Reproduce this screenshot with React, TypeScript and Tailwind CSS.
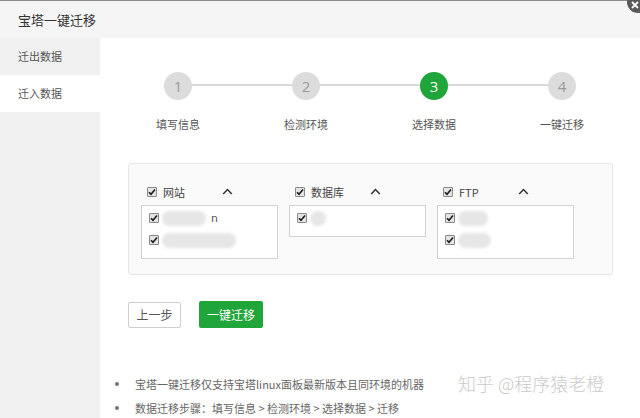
import React from "react";

const CheckBox = () => (
  <span className="inline-flex w-[10px] h-[10px] shrink-0 items-center justify-center border border-[#8a8a8a] bg-[#e4e4e4] rounded-[1px]">
    <svg width="8" height="8" viewBox="0 0 8 8">
      <path d="M1 4.2 L3 6.3 L7 1.6" fill="none" stroke="#1a1a1a" strokeWidth="1.6" />
    </svg>
  </span>
);

const Caret = () => (
  <svg width="11" height="7" viewBox="0 0 11 7">
    <polyline points="1.2,6 5.5,1.5 9.8,6" fill="none" stroke="#333" strokeWidth="1.5" />
  </svg>
);

const Blob = ({ w, h = 15 }: { w: number; h?: number }) => (
  <span
    className="inline-block rounded-full bg-[#e6e6e6] blur-[1.5px]"
    style={{ width: w, height: h }}
  />
);

type Item = { blobs: number[]; tail?: string };

const Column = ({ label, items }: { label: string; items: Item[] }) => (
  <div className="relative w-[137px] shrink-0">
    <div className="flex items-center h-[18px] pl-[6px] gap-[6px] text-[11px] text-[#444]">
      <CheckBox />
      <span className="leading-none">{label}</span>
    </div>
    <div className="absolute left-[81px] top-[5px]">
      <Caret />
    </div>
    <div className="mt-[4px] border border-[#d2d2d2] bg-white pt-[1px] pb-[7px] pl-[7px]">
      {items.map((it, i) => (
        <div key={i} className="flex items-center h-[22px] gap-[3px]">
          <CheckBox />
          {it.blobs.map((b, j) => (
            <Blob key={j} w={b} />
          ))}
          {it.tail && <span className="text-[11px] text-[#555] leading-none ml-[2px] font-['DejaVu_Sans']">{it.tail}</span>}
        </div>
      ))}
    </div>
  </div>
);

export default function App() {
  const steps = [
    { n: "1", label: "填写信息" },
    { n: "2", label: "检测环境" },
    { n: "3", label: "选择数据", active: true },
    { n: "4", label: "一键迁移" },
  ];
  return (
    <div className="relative w-[640px] h-[418px] overflow-hidden bg-white font-['Noto_Sans_CJK_SC','Noto_Sans',sans-serif]">
      {/* header */}
      <div className="h-[38px] border-t border-[#8c8c8c] bg-[#f5f5f5] flex items-center pl-[18px] text-[13px] text-[#333]">
        宝塔一键迁移
      </div>
      {/* close */}
      <div className="absolute left-[627px] top-[-9px] w-[22px] h-[22px] rounded-full bg-[#5a5a5a] flex items-center justify-center">
        <svg width="10" height="10" viewBox="0 0 10 10" className="translate-x-[-3px] translate-y-[3px]">
          <path d="M2 2 L8 8 M8 2 L2 8" stroke="#fff" strokeWidth="1.8" />
        </svg>
      </div>

      <div className="flex h-[380px]">
        {/* sidebar */}
        <div className="w-[100px] bg-[#f0f0f0] text-[11px] text-[#555]">
          <div className="h-[37px] flex items-center pl-[18px]">迁出数据</div>
          <div className="h-[37px] flex items-center pl-[18px] bg-white">迁入数据</div>
        </div>

        {/* main */}
        <div className="flex-1 pt-[34px]">
          {/* steps */}
          <div className="relative mx-[14px] grid grid-cols-4">
            <div className="absolute left-[64px] right-[64px] top-[12px] h-[2px] bg-[#d9d9d9]" />
            {steps.map((s) => (
              <div key={s.n} className="relative flex flex-col items-center">
                <div
                  className={
                    s.active
                      ? "w-[28px] h-[28px] rounded-full bg-[#20a53a] text-white flex items-center justify-center text-[15px] font-['Open_Sans']"
                      : "w-[28px] h-[28px] rounded-full bg-[#dcdcdc] text-[#9a9a9a] flex items-center justify-center text-[15px] font-['Open_Sans']"
                  }
                >
                  {s.n}
                </div>
                <div className="mt-[17px] text-[11px] leading-[14px] text-[#555]">{s.label}</div>
              </div>
            ))}
          </div>

          {/* selection box */}
          <div className="ml-[28px] mt-[32px] w-[485px] h-[112px] border border-[#e6e6e6] bg-[#fafafa] rounded-[3px] pt-[19px] pl-[12px] flex gap-[11px] items-start">
            <Column
              label="网站"
              items={[
                { blobs: [44], tail: "n" },
                { blobs: [74] },
              ]}
            />
            <Column label="数据库" items={[{ blobs: [16] }]} />
            <Column
              label="FTP"
              items={[{ blobs: [30] }, { blobs: [33] }]}
            />
          </div>

          {/* buttons */}
          <div className="ml-[28px] mt-[26px] flex items-center gap-[18px]">
            <button className="w-[53px] h-[26px] border border-[#cfcfcf] bg-white rounded-[2px] text-[12px] text-[#555]">
              上一步
            </button>
            <button className="w-[64px] h-[27px] bg-[#20a53a] rounded-[2px] text-[12px] text-white">
              一键迁移
            </button>
          </div>

          {/* notes */}
          <ul className="mt-[44px] ml-[15px] text-[11px] text-[#666]">
            <li className="flex items-center h-[24px]">
              <span className="w-[4px] h-[4px] rounded-full bg-[#777] mr-[16px]" />
              宝塔一键迁移仅支持宝塔linux面板最新版本且同环境的机器
            </li>
            <li className="flex items-center h-[24px]">
              <span className="w-[4px] h-[4px] rounded-full bg-[#777] mr-[16px]" />
              数据迁移步骤：填写信息 &gt; 检测环境 &gt; 选择数据 &gt; 迁移
            </li>
          </ul>
        </div>
      </div>

      {/* watermark */}
      <div className="absolute left-[458px] top-[370px] text-[18px] text-[#cacaca] font-light">
        知乎 @程序猿老橙
      </div>
    </div>
  );
}
